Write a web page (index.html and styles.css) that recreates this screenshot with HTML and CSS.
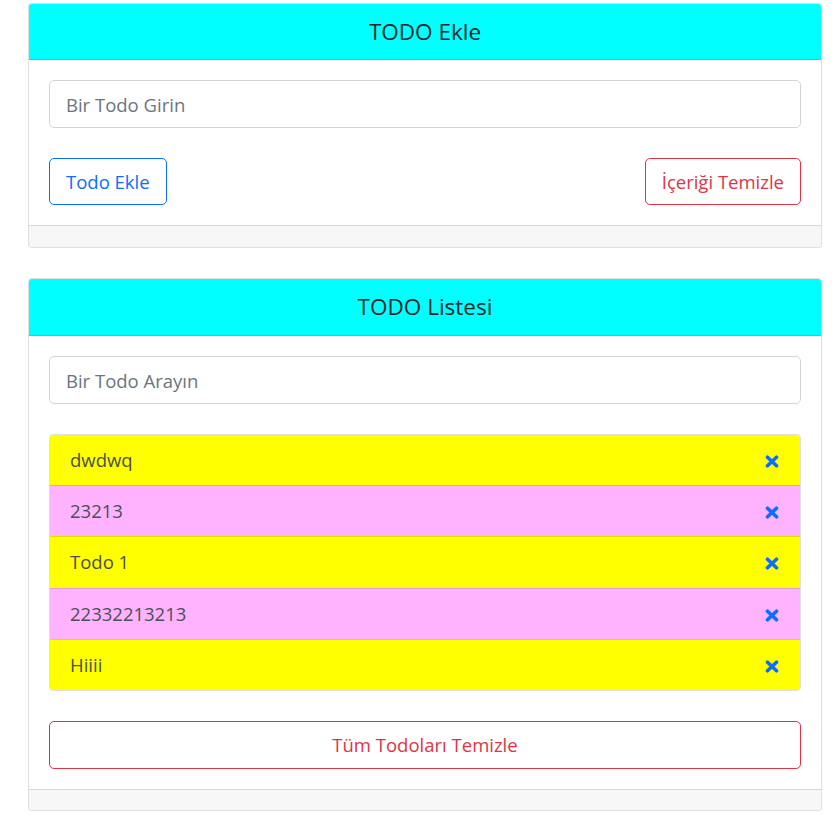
FILE: index.html
```html
<!DOCTYPE html>
<html lang="tr">
<head>
<meta charset="utf-8">
<title>TODO</title>
<link rel="stylesheet" href="styles.css">
</head>
<body>
<div class="page">
  <section class="card">
    <div class="card-header"><h4 class="card-title">TODO Ekle</h4></div>
    <div class="card-body">
      <input class="field" type="text" placeholder="Bir Todo Girin">
      <div class="actions">
        <button class="btn btn-primary">Todo Ekle</button>
        <button class="btn btn-danger">İçeriği Temizle</button>
      </div>
    </div>
    <div class="card-footer"></div>
  </section>

  <section class="card">
    <div class="card-header card-header-list"><h4 class="card-title">TODO Listesi</h4></div>
    <div class="card-body">
      <input class="field" type="text" placeholder="Bir Todo Arayın">
      <ul class="todo-list">
        <li class="todo-item yellow"><span>dwdwq</span><svg class="del" viewBox="0 0 14 13" width="14" height="13"><path d="M2.5 2.2 L11.5 10.8 M11.5 2.2 L2.5 10.8" /></svg></li>
        <li class="todo-item pink"><span>23213</span><svg class="del" viewBox="0 0 14 13" width="14" height="13"><path d="M2.5 2.2 L11.5 10.8 M11.5 2.2 L2.5 10.8" /></svg></li>
        <li class="todo-item yellow"><span>Todo 1</span><svg class="del" viewBox="0 0 14 13" width="14" height="13"><path d="M2.5 2.2 L11.5 10.8 M11.5 2.2 L2.5 10.8" /></svg></li>
        <li class="todo-item pink"><span>22332213213</span><svg class="del" viewBox="0 0 14 13" width="14" height="13"><path d="M2.5 2.2 L11.5 10.8 M11.5 2.2 L2.5 10.8" /></svg></li>
        <li class="todo-item yellow"><span>Hiiii</span><svg class="del" viewBox="0 0 14 13" width="14" height="13"><path d="M2.5 2.2 L11.5 10.8 M11.5 2.2 L2.5 10.8" /></svg></li>
      </ul>
      <button class="btn btn-danger btn-block">Tüm Todoları Temizle</button>
    </div>
    <div class="card-footer card-footer-list"></div>
  </section>
</div>
</body>
</html>
```

FILE: styles.css
```css
* { box-sizing: border-box; }
html, body {
  margin: 0;
  padding: 0;
  background: #fff;
  font-family: "Open Sans", "Noto Sans", "Liberation Sans", sans-serif;
  color: #212529;
}
.page {
  padding: 3px 0 0 28px;
  width: 822px;
}
.card {
  border: 1px solid rgba(0,0,0,.125);
  border-radius: 4px;
  background: #fff;
  overflow: hidden;
  margin-bottom: 30px;
}
.card-header {
  background: #00ffff;
  border-bottom: 1px solid rgba(0,0,0,.125);
  padding: 12px 20px;
  text-align: center;
}
.card-header-list { padding-bottom: 13px; }
.card-title {
  margin: 0;
  font-size: 22.5px;
  font-weight: 400;
  line-height: 31px;
  color: #212529;
}
.card-body {
  padding: 20px;
  display: flex;
  flex-direction: column;
  gap: 30px;
}
.card-footer {
  height: 22px;
  background: #f7f7f7;
  border-top: 1px solid rgba(0,0,0,.125);
}
.card-footer-list { height: 21px; }
.field {
  display: block;
  width: 100%;
  height: 48px;
  padding: 8px 16px;
  font-family: inherit;
  font-size: 18.5px;
  color: #495057;
  border: 1px solid #ced4da;
  border-radius: 5px;
  background: #fff;
  outline: none;
}
.field::placeholder { color: #6c757d; }
.actions {
  display: flex;
  justify-content: space-between;
}
.btn {
  font-family: inherit;
  font-size: 18.5px;
  line-height: 29px;
  padding: 8px 16px;
  background: #fff;
  border: 1px solid;
  border-radius: 5px;
  cursor: pointer;
}
.btn-primary { color: #0d6efd; border-color: #0d6efd; }
.btn-danger { color: #dc3545; border-color: #dc3545; }
.btn-block { width: 100%; height: 48px; }
.todo-list {
  list-style: none;
  margin: 0;
  padding: 0;
  border-radius: 4px;
  overflow: hidden;
  border: 1px solid rgba(0,0,0,.125);
}
.todo-item {
  display: flex;
  align-items: center;
  justify-content: space-between;
  padding: 10px 21px 10px 20px;
  height: 51.2px;
  font-size: 18.5px;
  line-height: 30px;
  color: #495057;
}
.todo-item + .todo-item { border-top: 1px solid rgba(0,0,0,.125); }
.todo-item:first-child { height: 50.2px; }
.yellow { background: #ffff00; }
.pink { background: #ffb3ff; }
.del {
  display: block;
  margin-top: 3px;
}
.del path {
  fill: none;
  stroke: #0d6efd;
  stroke-width: 3.6;
  stroke-linecap: round;
}
```
